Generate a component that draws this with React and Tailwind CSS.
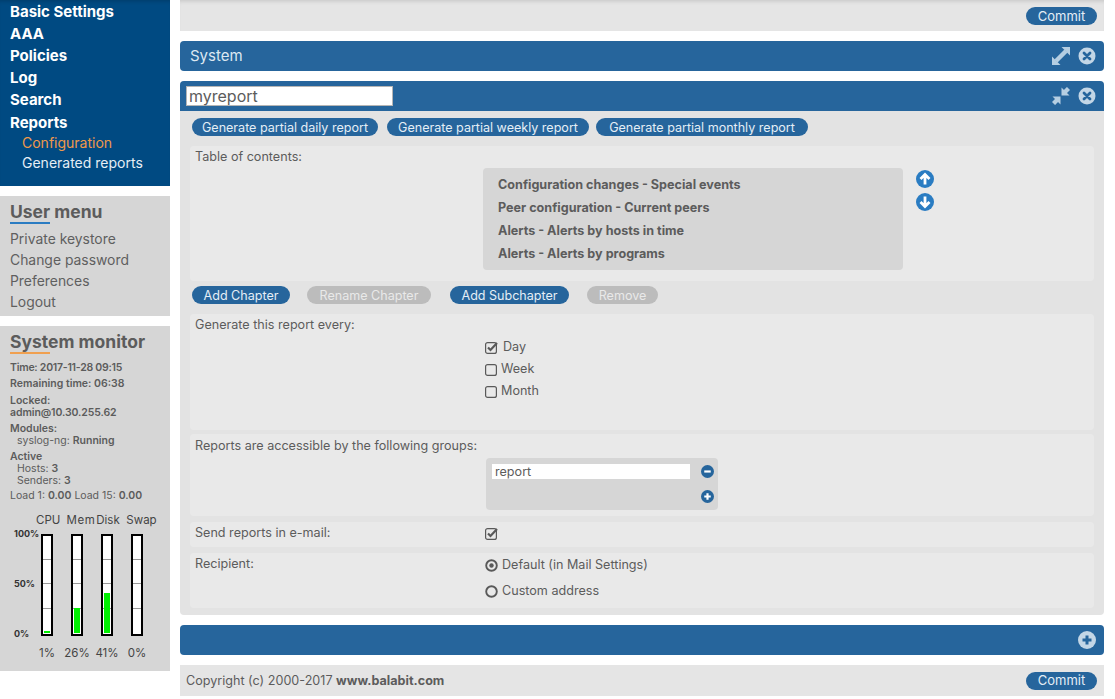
import React from "react";

const font = { fontFamily: "Inter, 'Open Sans', sans-serif" };

function Btn({ children, off, className = "" }) {
  return (
    <span className={`inline-flex items-center justify-center h-[18px] rounded-[9px] pt-[2px] text-[12.550px] leading-none whitespace-nowrap ${off ? "bg-[#bcbcbc] text-[#e9e9e9]" : "bg-[#26659c] text-[#e4eef6]"} ${className}`}>
      {children}
    </span>
  );
}

function CloseIcon() {
  return (
    <svg width="18" height="18" viewBox="0 0 18 18">
      <circle cx="9" cy="9" r="8.500" fill="#c3d6e6" />
      <path d="M6 6l6 6M12 6l-6 6" stroke="#26659c" strokeWidth="2.800" strokeLinecap="round" />
    </svg>
  );
}
function Expand() {
  return (
    <svg width="20" height="20" viewBox="0 0 20 20" fill="#b5cee2">
      <path d="M10.500 1H19v8.500z" />
      <path d="M1 10.500V19h8.500z" />
      <path d="M15 5L5 15" stroke="#b5cee2" strokeWidth="4.400" />
    </svg>
  );
}
function Collapse() {
  return (
    <svg width="18" height="18" viewBox="0 0 18 18" fill="#b5cee2">
      <path d="M9.500 0.500v8h8z" />
      <path d="M0.500 9.500h8v8z" />
      <path d="M16.500 1.500l-5 5" stroke="#b5cee2" strokeWidth="4.400" />
      <path d="M1.500 16.500l5-5" stroke="#b5cee2" strokeWidth="4.400" />
    </svg>
  );
}
function Round({ kind, size = 18, color = "#2a7cc2", fg = "#ffffff" }) {
  return (
    <svg width={size} height={size} viewBox="0 0 18 18">
      <circle cx="9" cy="9" r="9" fill={color} />
      {kind === "up" && <path d="M9 14.500V5M4.500 9l4.500-4.500 4.500 4.500" stroke={fg} strokeWidth="2.800" fill="none" />}
      {kind === "down" && <path d="M9 3.500V13M4.500 9l4.500 4.500 4.500-4.500" stroke={fg} strokeWidth="2.800" fill="none" />}
      {kind === "minus" && <path d="M4.500 9h9" stroke={fg} strokeWidth="3" />}
      {kind === "plus" && <path d="M4.500 9h9M9 4.500v9" stroke={fg} strokeWidth="3" />}
    </svg>
  );
}
function Check({ on }) {
  return (
    <svg width="13" height="13" viewBox="0 0 13 13" className="shrink-0">
      <rect x="0.600" y="1.600" width="10.800" height="10.800" rx="2" fill="none" stroke="#595959" strokeWidth="1.200" />
      {on && <path d="M3 6.500l2.500 2.500L12 2" fill="none" stroke="#595959" strokeWidth="2.200" />}
    </svg>
  );
}
function Radio({ on }) {
  return (
    <svg width="13" height="13" viewBox="0 0 13 13" className="shrink-0">
      <circle cx="6.500" cy="6.500" r="5.300" fill="none" stroke="#595959" strokeWidth="1.900" />
      {on && <circle cx="6.500" cy="6.500" r="2.200" fill="#595959" />}
    </svg>
  );
}

function Bar({ h }) {
  return (
    <div className="relative w-[12px] h-[102px] border-2 border-black bg-white">
      <div className="absolute left-0 right-0 top-[23px] h-px bg-[#999]" />
      <div className="absolute left-0 right-0 top-[47px] h-px bg-[#999]" />
      <div className="absolute left-0 right-0 top-[72px] h-px bg-[#999]" />
      <div className="absolute left-[1px] right-[1px] bottom-[1px] bg-[#00f000]" style={{ height: h }} />
    </div>
  );
}

function Sidebar() {
  const main = ["Basic Settings", "AAA", "Policies", "Log", "Search"];
  return (
    <div className="w-[170px] shrink-0 flex flex-col gap-[10px]">
      <div className="h-[186px] bg-[#004a82] pl-[10px] pt-[1px] text-white shadow-[inset_0_4px_4px_-3px_rgba(0,0,0,0.2)]">
        {main.map((m) => (
          <div key={m} className="h-[22px] leading-[22px] text-[15px] font-bold">{m}</div>
        ))}
        <div className="h-[22px] leading-[24px] text-[15px] font-bold">Reports</div>
        <div className="pl-[12px] h-[20px] leading-[20px] text-[14px] text-[#f0994a]">Configuration</div>
        <div className="pl-[12px] h-[20px] leading-[20px] text-[14px] text-[#e6eef5]">Generated reports</div>
      </div>
      <div className="h-[120px] bg-[#d6d6d6] pl-[10px] pt-[6px] text-[#5f5f5f]">
        <div className="text-[17.500px] font-bold leading-[20px] text-[#5c5c5c]">User menu</div>
        <div className="w-[40px] h-[2px] bg-[#2a7cc2] mb-[5px]" />
        {["Private keystore", "Change password", "Preferences", "Logout"].map((m) => (
          <div key={m} className="h-[21px] leading-[21px] text-[13.900px]">{m}</div>
        ))}
      </div>
      <div className="h-[345px] bg-[#d6d6d6] pl-[10px] pt-[6px] text-[#5c5c5c]">
        <div className="text-[17.500px] font-bold leading-[20px]">System monitor</div>
        <div className="w-[40px] h-[2px] bg-[#f0a050] mb-[8px]" />
        <div className="text-[10.500px] leading-[12px] font-semibold">
          <div className="tracking-[-0.25px]">Time: 2017-11-28 09:15</div>
          <div className="mt-[4px]">Remaining time: 06:38</div>
          <div className="mt-[5px]">Locked:<br /><span className="tracking-[-0.1px]">admin@10.30.255.62</span></div>
          <div className="mt-[4px]">Modules:</div>
          <div className="pl-[7px] font-normal">syslog-ng: <b className="font-semibold">Running</b></div>
          <div className="mt-[4px]">Active</div>
          <div className="pl-[7px] font-normal">Hosts: <b className="font-semibold">3</b></div>
          <div className="pl-[7px] font-normal">Senders: <b className="font-semibold">3</b></div>
          <div className="mt-[3px] font-normal">Load 1: <b className="font-semibold">0.00</b> Load 15: <b className="font-semibold">0.00</b></div>
        </div>
        <div className="flex mt-[11px] pl-[26px] text-[11.500px] leading-[14px] text-[#444] whitespace-nowrap">
          <div className="w-[24px] text-center">CPU</div>
          <div className="w-[30px] ml-[6px] text-center tracking-[0.6px]">Mem</div>
          <div className="w-[24px] text-center">Disk</div>
          <div className="w-[31px] ml-[6px] text-center">Swap</div>
        </div>
        <div className="flex mt-[7px]">
          <div className="relative w-[31px] h-[102px] text-[9px] font-bold text-[#333]">
            <div className="absolute left-[4px] top-[-7px]">100%</div>
            <div className="absolute left-[4px] top-[43px]">50%</div>
            <div className="absolute left-[4px] top-[93px]">0%</div>
          </div>
          <div className="flex gap-[18px]">
            <Bar h={2} />
            <Bar h={25} />
            <Bar h={40} />
            <Bar h={0} />
          </div>
        </div>
        <div className="flex mt-[10px] pl-[22px] text-[11.500px] leading-[14px] text-[#444]">
          <div className="w-[30px] text-center">1%</div>
          <div className="w-[30px] text-center">26%</div>
          <div className="w-[30px] text-center">41%</div>
          <div className="w-[30px] text-center">0%</div>
        </div>
      </div>
    </div>
  );
}

function Section({ className = "", label, children, labelTop = "top-[3px]" }) {
  return (
    <div className={`relative bg-[#e9e9e9] rounded-[4px] pl-[5px] ${className}`}>
      <div className={`absolute left-[5px] ${labelTop} text-[12.600px] leading-[16px] text-[#5c5c5c] whitespace-nowrap`}>{label}</div>
      {children}
    </div>
  );
}

function Main() {
  const toc = [
    "Configuration changes - Special events",
    "Peer configuration - Current peers",
    "Alerts - Alerts by hosts in time",
    "Alerts - Alerts by programs",
  ];
  return (
    <div className="w-[924px] ml-[10px] flex flex-col">
      <div className="h-[31px] bg-[#e5e5e5] flex items-center justify-end pr-[7px] pt-[1px] shadow-[inset_0_4px_4px_-3px_rgba(0,0,0,0.15)]">
        <Btn className="w-[71px] !text-[13px] !pt-[1px]">Commit</Btn>
      </div>
      <div className="h-[30px] mt-[10px] bg-[#26659c] rounded-[4px] flex items-center pl-[10px] pr-[8px] text-[#dce8f2] text-[15px]">
        <span className="flex-1 h-[20px] leading-[20px]">System</span>
        <span className="mr-[7px] flex"><Expand /></span>
        <CloseIcon />
      </div>
      <div className="h-[534px] mt-[10px] bg-[#e3e3e3] rounded-[4px] flex flex-col overflow-hidden">
        <div className="h-[30px] bg-[#26659c] flex items-center pl-[6px] pr-[8px] shrink-0">
          <div className="w-[207px] h-[20px] bg-white border border-[#b5b5b5] pl-[2px] leading-[18px] text-[16px] text-[#5c5c5c]">myreport</div>
          <div className="flex-1" />
          <span className="mr-[8px] flex"><Collapse /></span>
          <CloseIcon />
        </div>
        <div className="flex pl-[12px] mt-[7px] h-[18px]">
          <Btn className="w-[186px]">Generate partial daily report</Btn>
          <Btn className="w-[202px] ml-[9px]">Generate partial weekly report</Btn>
          <Btn className="w-[212px] ml-[7px]">Generate partial monthly report</Btn>
        </div>
        <Section className="mx-[10px] mt-[10px] h-[135px] flex" label="Table of contents:">
          <div className="ml-[288px] mt-[22px] w-[420px] h-[102px] bg-[#d6d6d6] rounded-[4px] pl-[15px] pt-[5px] shrink-0">
            {toc.map((t) => (
              <div key={t} className="h-[23px] leading-[23px] text-[12.600px] font-bold text-[#5c5c5c]">{t}</div>
            ))}
          </div>
          <div className="ml-[13px] mt-[24px] flex flex-col gap-[5px]">
            <Round kind="up" />
            <Round kind="down" />
          </div>
        </Section>
        <div className="flex pl-[12px] mt-[5px] h-[18px]">
          <Btn className="w-[98px]">Add Chapter</Btn>
          <Btn off className="w-[124px] ml-[17px]">Rename Chapter</Btn>
          <Btn className="w-[119px] ml-[19px]">Add Subchapter</Btn>
          <Btn off className="w-[71px] ml-[18px]">Remove</Btn>
        </div>
        <Section className="mx-[10px] mt-[10px] h-[116px]" label="Generate this report every:">
          <div className="pl-[290px] pt-[22px] text-[12.600px] text-[#5c5c5c]">
            <div className="h-[22px] flex items-center gap-[5px]"><Check on /><span>Day</span></div>
            <div className="h-[22px] flex items-center gap-[3px]"><Check /><span>Week</span></div>
            <div className="h-[22px] flex items-center gap-[3px]"><Check /><span>Month</span></div>
          </div>
        </Section>
        <Section className="mx-[10px] mt-[4px] h-[82px] pt-[24px]" labelTop="top-[4px]" label="Reports are accessible by the following groups:">
          <div className="ml-[291px] w-[232px] h-[52px] bg-[#d6d6d6] rounded-[4px]">
            <div className="flex items-start pt-[6px] pl-[6px]">
              <div className="w-[198px] h-[15px] bg-white pl-[3px] text-[12.600px] leading-[15px] text-[#5c5c5c]">report</div>
              <span className="ml-[11px] mt-[1px] flex"><Round kind="minus" size={13} color="#26659c" /></span>
            </div>
            <div className="flex justify-end pr-[4px] mt-[11px]"><Round kind="plus" size={13} color="#26659c" /></div>
          </div>
        </Section>
        <Section className="mx-[10px] mt-[6px] h-[25px] flex" label="Send reports in e-mail:">
          <div className="ml-[290px] mt-[5px] flex"><Check on /></div>
        </Section>
        <Section className="mx-[10px] mt-[6px] h-[55px]" label="Recipient:">
          <div className="pl-[290px] -mt-px text-[12.600px] text-[#5c5c5c]">
            <div className="h-[26px] flex items-center gap-[4px]"><Radio on /><span>Default (in Mail Settings)</span></div>
            <div className="h-[26px] flex items-center gap-[4px]"><Radio /><span>Custom address</span></div>
          </div>
        </Section>
      </div>
      <div className="h-[30px] mt-[10px] bg-[#26659c] rounded-[4px] flex items-center justify-end pr-[8px]">
        <Round kind="plus" size={18} color="#c3d6e6" fg="#26659c" />
      </div>
      <div className="h-[31px] mt-[10px] bg-[#e5e5e5] flex items-center pl-[6px] pr-[7px] text-[12.600px] text-[#5c5c5c]">
        <span className="flex-1 pt-[1px]">Copyright (c) 2000-2017 <b className="font-bold">www.balabit.com</b></span>
        <Btn className="w-[71px] !text-[13px] !pt-0">Commit</Btn>
      </div>
    </div>
  );
}

export default function App() {
  return (
    <div className="flex w-[1115px] h-[699px] overflow-hidden bg-white" style={font}>
      <Sidebar />
      <Main />
    </div>
  );
}
